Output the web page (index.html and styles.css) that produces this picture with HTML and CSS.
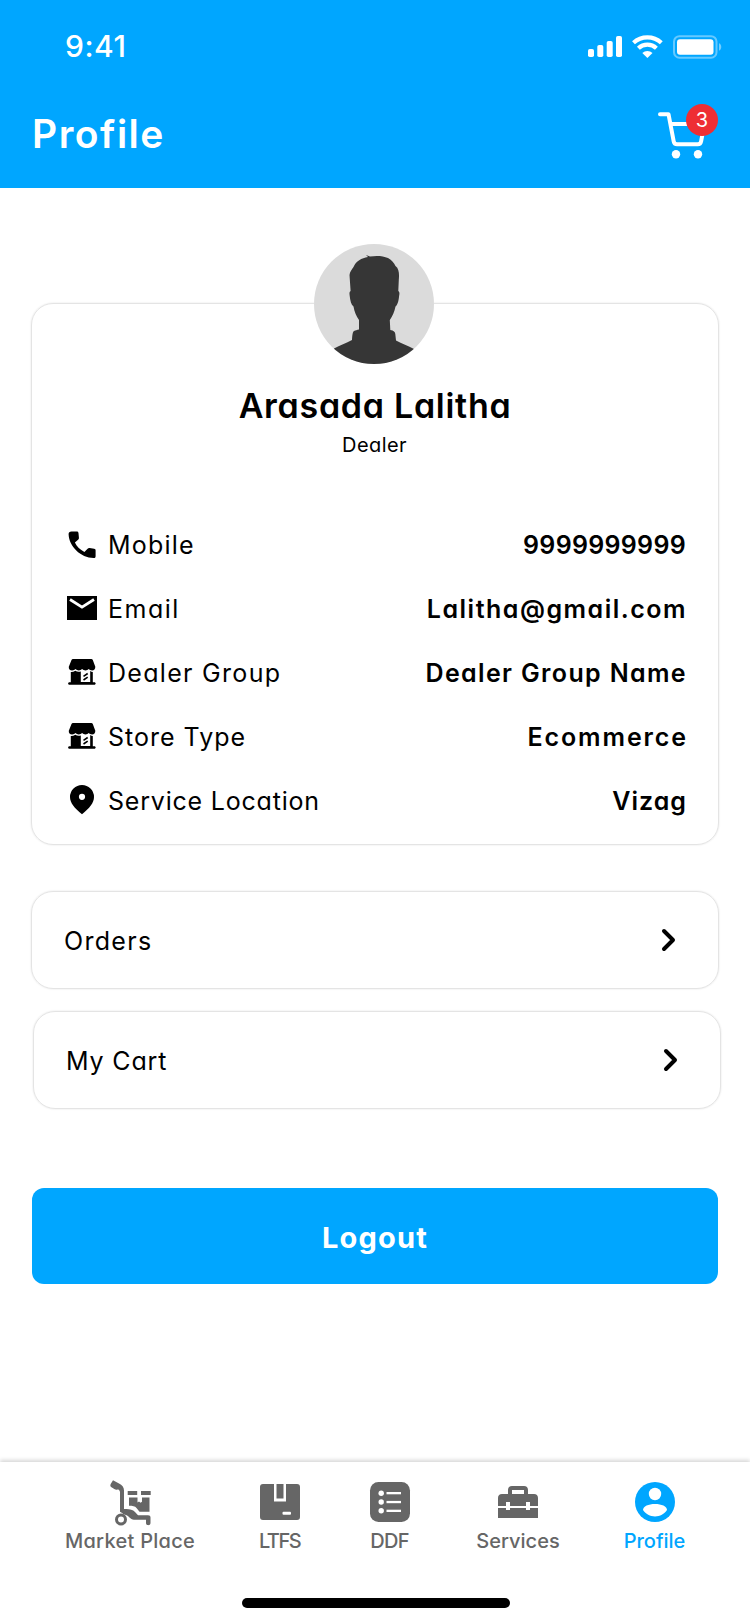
FILE: index.html
```html
<!DOCTYPE html>
<html lang="en">
<head>
  <meta charset="UTF-8" />
  <meta name="viewport" content="width=device-width, initial-scale=1.0"/>
  <title>Profile</title>
  <link rel="stylesheet" href="styles.css">
</head>
<body>

  <!-- Header -->
  <header class="header">
    <div class="status-bar">
      <span class="time">9:41</span>
      <svg class="status-icons" width="136" height="26" viewBox="0 0 136 26" fill="#fff">
        <rect x="1" y="15" width="6" height="8" rx="1.8"/>
        <rect x="10.300" y="11" width="6" height="12" rx="1.8"/>
        <rect x="19.700" y="7" width="6" height="16" rx="1.8"/>
        <rect x="29" y="2" width="6" height="21" rx="1.8"/>
        <g fill="none" stroke="#fff" stroke-width="4.200">
          <path d="M46.500 8.800a20.500 20.500 0 0 1 27.800 0"/>
          <path d="M51.400 14.200a13.200 13.200 0 0 1 18 0"/>
        </g>
        <path d="M55.300 19a7.600 7.600 0 0 1 10.200 0l-5.100 5z"/>
        <rect x="87" y="2.200" width="42.500" height="21.500" rx="5.500" fill="none" stroke="#fff" stroke-width="2" opacity=".4"/>
        <rect x="90" y="5.300" width="36.500" height="15.500" rx="3"/>
        <path d="M132 9.300c3 1.200 3 6.200 0 7.400z" opacity=".45"/>
      </svg>
    </div>
    <div class="title-row">
      <h1>Profile</h1>
      <div class="cart">
        <svg width="48" height="50" viewBox="0 0 48 50" fill="none" stroke="#fff" stroke-width="4" stroke-linecap="round" stroke-linejoin="round">
          <path d="M2 4.200h8.500l5.200 27.200c.4 2 1.500 2.900 3.400 2.900h20.600c1.900 0 3-.9 3.400-2.900l3.400-17.400H12.600"/>
          <circle cx="18" cy="44.200" r="4.200" fill="#fff" stroke="none"/>
          <circle cx="40" cy="44.200" r="4.200" fill="#fff" stroke="none"/>
        </svg>
        <span class="badge">3</span>
      </div>
    </div>
  </header>

  <main class="content">
    <!-- Profile card -->
    <section class="card profile">
      <svg class="avatar" width="120" height="120" viewBox="0 0 120 120">
        <defs><clipPath id="round"><circle cx="60" cy="60" r="60"/></clipPath></defs>
        <g clip-path="url(#round)">
          <rect width="120" height="120" fill="#dbdbdb"/>
          <path fill="#363636" d="M54 13l-2-2 4 1.500c6-1 13-.8 18 1.500 4 2 6 5 7.500 8 4 3 3.700 9 3.300 14l-.5 11c1.500 1 1.200 3 .8 5-.4 4-1.100 8.500-3.600 10.500-1 5.500-3 9.500-5.700 13.500l.5 10c3.500.5 4.800 2 5 4l.7 6.500c6 3.500 12 5 18 8.500V125H20v-20.500c6-3.500 12-5 18-8.500.2-4 .5-8 2-9 1.500-.7 3-1 5-1.500V76c-2.700-4-4.700-8-5.500-13.500-2.500-2-3.200-6-3.800-10.500-.4-3-.4-4 .9-5L35.500 31c.2-3.500 2.500-5.500 4-8 2.500-6 8-9 14.500-10z"/>
        </g>
      </svg>
      <h2>Arasada Lalitha</h2>
      <p class="role">Dealer</p>

      <ul class="details">
        <li class="mobile">
          <svg class="icon" width="32" height="32" viewBox="0 0 32 32">
            <path d="M5.500 2.500h5.200c1.200 0 1.700.6 1.800 1.700l.4 4.300c.1.900-.1 1.600-.8 2.200L8.900 13.600c2 4.200 5.100 7.100 9.500 9.400l3.200-3.200c.6-.6 1.200-.8 2-.7l4.500.7c1 .2 1.500.7 1.500 1.700v5.700c0 1.200-.7 1.900-1.900 1.900C14.500 28.700 3 17.500 2.600 5.300c0-1.800 1-2.800 2.900-2.800z"/>
          </svg>
          <span class="label">Mobile</span>
          <span class="value">9999999999</span>
        </li>
        <li class="email">
          <svg class="icon" width="32" height="32" viewBox="0 0 32 32">
            <path d="M1 3h30v24H1z"/>
            <path d="M4 6.500l12 7.600L28 6.500" fill="none" stroke="#fff" stroke-width="2.800"/>
          </svg>
          <span class="label">Email</span>
          <span class="value">Lalitha@gmail.com</span>
        </li>
        <li class="group">
          <svg class="icon" width="32" height="32" viewBox="0 0 32 32">
            <path d="M7 2h18.300c.7 0 1.200.3 1.500 1l2.500 6.800c.1 2.200-1.200 3.700-3.200 3.700-1.500 0-2.700-.5-3.400-1.400-1.400 1.800-4.900 1.900-6.600 0-1.600 1.900-5.100 1.800-6.600 0-.8.900-1.900 1.400-3.400 1.400-2.200 0-3.600-1.500-3.300-3.700L5.500 3c.3-.7.800-1 1.500-1z"/>
            <path d="M4.800 15c1.600.1 3.200-.3 4.500-1.200 1.700 1 3.700 1.200 5.500.6V25h9.400V14c.8.500 1.600.9 2.600 1v10.300h1.500c1.800 0 1.800 2.500 0 2.500H3.500c-1.800 0-1.800-2.500 0-2.500h1.300z"/>
            <path d="M17.500 19.300l4.200-2.800M17.500 23l4.200-2.800" fill="none" stroke="#000" stroke-width="1.600"/>
          </svg>
          <span class="label">Dealer Group</span>
          <span class="value">Dealer Group Name</span>
        </li>
        <li class="store">
          <svg class="icon" width="32" height="32" viewBox="0 0 32 32">
            <path d="M7 2h18.300c.7 0 1.200.3 1.500 1l2.500 6.800c.1 2.200-1.200 3.700-3.200 3.700-1.500 0-2.700-.5-3.400-1.400-1.400 1.800-4.900 1.900-6.600 0-1.600 1.900-5.100 1.800-6.600 0-.8.900-1.900 1.400-3.400 1.400-2.200 0-3.600-1.500-3.300-3.700L5.500 3c.3-.7.800-1 1.500-1z"/>
            <path d="M4.800 15c1.600.1 3.200-.3 4.500-1.200 1.700 1 3.700 1.200 5.500.6V25h9.400V14c.8.500 1.600.9 2.600 1v10.300h1.500c1.800 0 1.800 2.500 0 2.500H3.500c-1.800 0-1.800-2.500 0-2.500h1.300z"/>
            <path d="M17.500 19.300l4.200-2.800M17.500 23l4.200-2.800" fill="none" stroke="#000" stroke-width="1.600"/>
          </svg>
          <span class="label">Store Type</span>
          <span class="value">Ecommerce</span>
        </li>
        <li class="location">
          <svg class="icon" width="32" height="32" viewBox="0 0 32 32">
            <path fill-rule="evenodd" d="M16 0a12 12 0 0 1 12 12c0 6-4.500 11-12 17.300C8.500 23 4 18 4 12a12 12 0 0 1 12-12zm0 8.700a3.100 3.100 0 1 0 0 6.200 3.100 3.100 0 0 0 0-6.200z"/>
          </svg>
          <span class="label">Service Location</span>
          <span class="value">Vizag</span>
        </li>
      </ul>
    </section>

    <!-- Links -->
    <a class="card link orders">
      <span>Orders</span>
      <svg width="18" height="26" viewBox="0 0 18 26"><path d="M4 4l9 9-9 9"/></svg>
    </a>
    <a class="card link my-cart">
      <span>My Cart</span>
      <svg width="18" height="26" viewBox="0 0 18 26"><path d="M4 4l9 9-9 9"/></svg>
    </a>

    <button class="logout">Logout</button>
  </main>

  <!-- Bottom navigation -->
  <nav class="nav">
    <div class="tabs">
      <a class="tab market">
        <svg width="44" height="48" viewBox="0 0 44 48" fill="#666">
          <path d="M5 2.200l6 3.300c3 1.500 5 3.500 5 7V31c5-.3 8.500.3 11 3l3 3.300h10c1.700 0 2.500.8 2.500 2.300v5.300c0 3-4.500 3-4.500 0v-3.200H26c-2 0-3.300-1-4.500-2.200-1.500-2-4-2.700-6-3.200-1-1.300-2.500-2-3.500-2.500V14.500c0-1.500-.5-2.500-2-3.300-1.500 1-2.600.3-3.700-.3L3.500 9.300C2.300 8.500 2 7.400 2.700 6L5 2.200z"/>
          <circle cx="13" cy="41.500" r="4.500" fill="none" stroke="#666" stroke-width="3"/>
          <path d="M19.700 13h9.500v4h-9.500zM33 13h9.700v4H33zM21 19.500h8.500v5l1.500-1 1.500 1.200 1.500-1v-4.200h7.500v14.300H31.500L28.500 30c-1.500-1.800-4-2.200-7.500-2.200z"/>
        </svg>
        <span>Market Place</span>
      </a>
      <a class="tab ltfs">
        <svg width="44" height="48" viewBox="0 0 44 48" fill="#666">
          <path d="M5 6h11v17.500h12V6h11a3 3 0 0 1 3 3v30a3 3 0 0 1-3 3H5a3 3 0 0 1-3-3V9a3 3 0 0 1 3-3z"/>
          <path d="M18.500 6h7v14.500h-7z"/>
          <rect x="24.500" y="33.700" width="8.500" height="3" rx="1" fill="#fff"/>
        </svg>
        <span>LTFS</span>
      </a>
      <a class="tab ddf">
        <svg width="44" height="48" viewBox="0 0 44 48" fill="#666">
          <rect x="2" y="4" width="40" height="40" rx="8.500"/>
          <g fill="#fff">
            <circle cx="13.200" cy="15.200" r="2.700"/><circle cx="13.200" cy="24" r="2.700"/><circle cx="13.200" cy="32.800" r="2.700"/>
            <rect x="18.500" y="14" width="14.500" height="2.300"/><rect x="18.500" y="22.900" width="14.500" height="2.300"/><rect x="18.500" y="31.700" width="14.500" height="2.300"/>
          </g>
        </svg>
        <span>DDF</span>
      </a>
      <a class="tab services">
        <svg width="44" height="48" viewBox="0 0 44 48" fill="#666">
          <path fill-rule="evenodd" d="M12 16v-4c0-2.500 1.500-4 4-4h12c2.500 0 4 1.500 4 4v4h6c2.500 0 4 1.500 4 4v8h-8v-4h-4v4H14v-4h-4v4H2v-8c0-2.500 1.500-4 4-4zm4 0h12v-4H16z"/>
          <path d="M2 30h8v2h4v-2h16v2h4v-2h8v10H2z"/>
        </svg>
        <span>Services</span>
      </a>
      <a class="tab me active">
        <svg width="44" height="48" viewBox="0 0 44 48">
          <circle cx="22" cy="24" r="20" fill="#00a6ff"/>
          <circle cx="22" cy="16" r="6.200" fill="#fff"/>
          <path d="M10 32c0-3.800 5.500-6 12-6s12 2.200 12 6c-2.800 4-7 6.400-12 6.400S12.800 36 10 32z" fill="#fff"/>
        </svg>
        <span>Profile</span>
      </a>
    </div>
    <div class="home-indicator"></div>
  </nav>

</body>
</html>
```
FILE: styles.css
```css
* { margin: 0; padding: 0; box-sizing: border-box; }

body {
  width: 750px;
  height: 1624px;
  display: flex;
  flex-direction: column;
  overflow: hidden;
  font-family: Inter, "Open Sans", sans-serif;
  font-feature-settings: "cv11";
  background: #fff;
  color: #000;
}

svg { display: block; flex-shrink: 0; }

/* Header */
.header {
  height: 188px;
  background: #00a6ff;
  color: #fff;
}

.status-bar {
  height: 91px;
  padding: 0 27px 0 65px;
  display: flex;
  justify-content: space-between;
  align-items: center;
}

.time {
  font-size: 30px;
  font-weight: 500;
  letter-spacing: 0.5px;
}

.status-icons { margin-top: 2px; }

.title-row {
  height: 86px;
  padding: 0 32px 0 32px;
  display: flex;
  justify-content: space-between;
  align-items: center;
}

h1 {
  margin-top: -2px;
  font-size: 39px;
  font-weight: 600;
  letter-spacing: 1.5px;
}

.cart {
  position: relative;
  width: 60px;
  height: 50px;
  margin-top: 2px;
}

.badge {
  position: absolute;
  top: -6px;
  right: 0;
  width: 32px;
  height: 32px;
  border-radius: 50%;
  background: #ee2e34;
  font-size: 20px;
  line-height: 32px;
  text-align: center;
}

/* Content */
.content {
  flex: 1;
  padding: 115px 31px 0;
  display: flex;
  flex-direction: column;
}

.card {
  width: 688px;
  border: 1px solid #e4e4e4;
  border-radius: 22px;
  box-shadow: 0 0 2px rgba(0, 0, 0, 0.12);
}

.profile {
  height: 542px;
  display: flex;
  flex-direction: column;
  align-items: center;
}

.avatar { margin: -60px 2px 0 0; }

h2 {
  margin-top: 20px;
  font-size: 34px;
  line-height: 44px;
  font-weight: 600;
  letter-spacing: 0.72px;
}

.role {
  margin: 2px 1px 0 0;
  font-size: 20px;
  line-height: 30px;
  letter-spacing: 0.4px;
}

.details {
  width: 100%;
  margin-top: 53px;
  padding: 0 32px 0 34px;
  list-style: none;
}

.details li {
  height: 64px;
  display: flex;
  align-items: center;
  font-size: 25px;
}

.icon { margin-right: 10px; }

.value {
  margin-left: auto;
  font-weight: 600;
}

/* Tracking per row */
.mobile .label { letter-spacing: 1.2px; }
.mobile .value { letter-spacing: 0.3px; }
.email .label { letter-spacing: 1.5px; }
.email .value { letter-spacing: 1.5px; margin-right: -1px; }
.group .label { letter-spacing: 1.3px; }
.group .value { letter-spacing: 1.36px; margin-right: -1px; }
.store .label { letter-spacing: 1px; }
.store .value { letter-spacing: 1.9px; margin-right: -2px; }
.location .label { letter-spacing: 0.8px; }
.location .value { letter-spacing: 1px; margin-right: -1px; }

.link {
  height: 98px;
  padding: 0 40px 0 32px;
  display: flex;
  justify-content: space-between;
  align-items: center;
  font-size: 25px;
}

.link span { margin-top: 2px; }

.link path {
  fill: none;
  stroke: #000;
  stroke-width: 4;
  stroke-linecap: round;
  stroke-linejoin: round;
}

.orders { margin-top: 46px; letter-spacing: 1.3px; }
.my-cart { margin: 22px 0 0 2px; letter-spacing: 0.85px; }

.logout {
  width: 686px;
  height: 96px;
  margin: 79px 0 0 1px;
  padding-top: 2px;
  border: none;
  border-radius: 12px;
  background: #00a6ff;
  color: #fff;
  font-family: inherit;
  font-size: 29px;
  font-weight: 700;
  letter-spacing: 1.15px;
}

/* Bottom navigation */
.nav {
  height: 162px;
  padding-top: 16px;
  background: #fff;
  box-shadow: 0 -2px 4px rgba(0, 0, 0, 0.16);
}

.tabs {
  display: flex;
  gap: 62px;
  padding-left: 65px;
}

.tab {
  display: flex;
  flex-direction: column;
  align-items: center;
  color: #666;
  font-size: 20px;
  line-height: 30px;
  font-weight: 500;
  white-space: nowrap;
}

.market { width: 130px; letter-spacing: 0.28px; }
.ltfs { width: 45px; letter-spacing: -1.5px; }
.ddf { width: 51px; letter-spacing: -0.8px; }
.services { width: 82px; }
.me { width: 67px; }
.active { color: #00a6ff; }

.home-indicator {
  width: 268px;
  height: 10px;
  margin: 42px 0 0 242px;
  border-radius: 5px;
  background: #000;
}
```
